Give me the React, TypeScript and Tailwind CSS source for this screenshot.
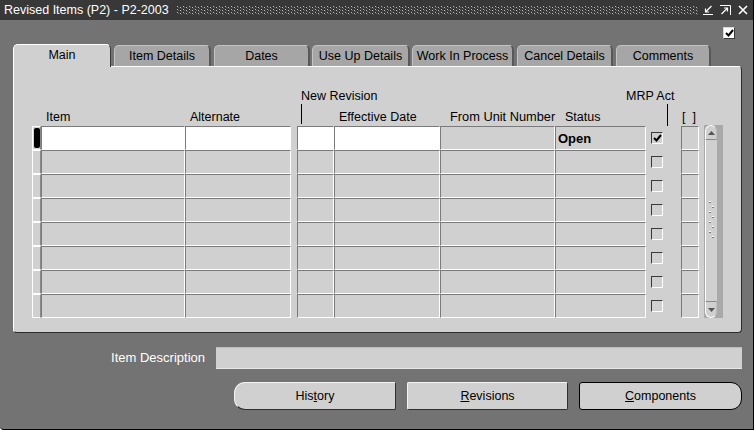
import React from 'react';

function TitleIcons() {
  return (
    <div className="flex items-center gap-[7px] ml-auto mr-[5px]">
      <svg width="10" height="10" viewBox="0 0 10 10">
        <path d="M8.5 1 L2.5 7 M2.5 3.5 V7 H6" stroke="#fff" strokeWidth="1.2" fill="none" />
        <path d="M0 9.5 H10" stroke="#fff" strokeWidth="1" />
      </svg>
      <svg width="11" height="10" viewBox="0 0 11 10">
        <path d="M0 0.5 H10.5 V10" stroke="#fff" strokeWidth="1" fill="none" />
        <path d="M1.5 9 L7.5 3 M4 3 H7.5 V6.5" stroke="#fff" strokeWidth="1.2" fill="none" />
      </svg>
      <svg width="10" height="10" viewBox="0 0 10 10">
        <path d="M1 1 L9 9 M9 1 L1 9" stroke="#fff" strokeWidth="1.6" />
      </svg>
    </div>
  );
}

function Check({ checked }: { checked?: boolean }) {
  return (
    <div className="w-[12px] h-[12px] border border-[#3a3a3a] border-r-white border-b-white flex items-center justify-center">
      {checked && (
        <svg width="9" height="8" viewBox="0 0 9 8">
          <path d="M1 4 L3.5 6.5 L8 1" stroke="#000" strokeWidth="2" fill="none" />
        </svg>
      )}
    </div>
  );
}

function Row({ first }: { first?: boolean }) {
  const cell = 'h-[24px] border border-[#7a7a7a] border-r-white border-b-white';
  const bg = first ? 'bg-white' : 'bg-[#d0d0d0]';
  return (
    <div className="flex h-[24px]">
      <div className="w-[9px] h-[24px] flex items-center justify-center border border-white border-r-[#8a8a8a]">
        {first && <div className="w-[6px] h-[20px] bg-black rounded-[2px]" />}
      </div>
      <div className={`w-[144px] ${cell} ${bg}`} />
      <div className={`w-[106px] ${cell} ${bg}`} />
      <div className="w-[6px]" />
      <div className={`w-[37px] ${cell} ${bg}`} />
      <div className={`w-[106px] ${cell} ${bg}`} />
      <div className={`w-[115px] ${cell} bg-[#d0d0d0]`} />
      <div className={`w-[91px] ${cell} bg-[#d0d0d0] flex items-center pl-[2px]`}>
        {first && <span className="text-[13px] font-bold leading-none">Open</span>}
      </div>
      <div className="w-[35px] flex items-center pl-[5px]">
        <Check checked={first} />
      </div>
      <div className={`w-[18px] ${cell} bg-[#d0d0d0]`} />
    </div>
  );
}

function Scrollbar() {
  return (
    <div className="w-[19px] h-[193px] -mt-[1px] ml-[5px] bg-[#a9a9a9] flex">
      <div className="w-[12px] h-full ml-[1px] flex flex-col">
        <div className="h-[15px] rounded-t-[6px] border border-white border-b-[#8a8a8a] border-r-[#bdbdbd] bg-[#d0d0d0] flex items-center justify-center">
          <svg width="7" height="4" viewBox="0 0 7 4"><path d="M0 4 L3.5 0 L7 4 Z" fill="#555" /></svg>
        </div>
        <div className="flex-1 border-l border-white bg-[#d0d0d0] flex items-center justify-center">
          <svg width="8" height="44" viewBox="0 0 8 44">
            {[0, 1, 2, 3, 4, 5, 6, 7].map((i) => (
              <g key={i}>
                <rect x={i % 2 ? 4 : 1} y={i * 5 + 2} width="2" height="1" fill="#fff" />
                <rect x={i % 2 ? 4 : 1} y={i * 5 + 3} width="2" height="1" fill="#7a7a7a" />
              </g>
            ))}
          </svg>
        </div>
        <div className="h-[17px] rounded-b-[6px] border border-white border-t-[#8a8a8a] border-r-[#bdbdbd] bg-[#d0d0d0] flex items-center justify-center">
          <svg width="7" height="4" viewBox="0 0 7 4"><path d="M0 0 L3.5 4 L7 0 Z" fill="#555" /></svg>
        </div>
      </div>
    </div>
  );
}

const TABS = [
  { label: 'Item Details', cls: 'ml-[3px] w-[97px]' },
  { label: 'Dates', cls: 'ml-[3px] w-[96px]' },
  { label: 'Use Up Details', cls: 'ml-[2px] w-[98px]' },
  { label: 'Work In Process', cls: 'ml-[2px] w-[102px]' },
  { label: 'Cancel Details', cls: 'ml-[3px] w-[96px]' },
  { label: 'Comments', cls: 'ml-[3px] w-[95px]' },
];

export default function App() {
  return (
    <div className="w-[756px] h-[433px] bg-white overflow-hidden font-['Liberation_Sans',Arial,sans-serif] text-[12.5px] text-black">
      <div className="w-[754px] h-[430px] bg-[#737373] border-r border-b border-black rounded-bl-[4px] flex flex-col">
        {/* Title bar */}
        <div className="h-[20px] bg-[#383838] flex items-center">
          <span className="pl-[4px] text-white text-[12.5px] leading-none whitespace-nowrap">Revised Items (P2) - P2-2003</span>
          <svg className="ml-[8px] mt-[1px]" width="522" height="9">
            <defs>
              <pattern id="dots" width="6" height="3" patternUnits="userSpaceOnUse">
                <rect x="0" y="0" width="1" height="1" fill="#bdbdbd" />
                <rect x="1" y="1" width="1" height="1" fill="#606060" />
                <rect x="3" y="1" width="1" height="1" fill="#bdbdbd" />
                <rect x="4" y="2" width="1" height="1" fill="#606060" />
              </pattern>
            </defs>
            <rect width="522" height="9" fill="url(#dots)" />
          </svg>
          <TitleIcons />
        </div>

        {/* top-right checkbox */}
        <div className="flex justify-end pr-[18px] mt-[7px]">
          <div className="w-[12px] h-[12px] bg-white border border-[#d8d8d8] border-r-[#3a3a3a] border-b-[#3a3a3a] flex items-center justify-center">
            <svg width="9" height="8" viewBox="0 0 9 8">
              <path d="M1 4 L3.5 6.5 L8 1" stroke="#000" strokeWidth="2" fill="none" />
            </svg>
          </div>
        </div>

        {/* Tabs */}
        <div className="flex items-end h-[22px] mt-[5px] pl-[13px]">
          <div className="relative z-10 w-[98px] h-[23px] -mb-[1px] bg-[#d0d0d0] rounded-t-[5px] border-l border-t border-white border-r border-r-[#3a3a3a] flex items-center justify-center pb-[1px]">
            Main
          </div>
          {TABS.map((t) => (
            <div
              key={t.label}
              className={`${t.cls} h-[21px] bg-[#a6a6a6] rounded-t-[5px] border-t border-l border-t-[#c4c4c4] border-l-[#c4c4c4] border-r-2 border-r-[#585858] flex items-center justify-center whitespace-nowrap`}
            >
              {t.label}
            </div>
          ))}
        </div>

        {/* Panel */}
        <div className="ml-[13px] w-[729px] h-[267px] bg-[#d0d0d0] rounded-[4px] rounded-tl-none border border-white border-r-[#2c2c2c] border-b-[#2c2c2c] pl-[18px] pt-[22px]">
          <div className="flex h-[15px] leading-[14px]">
            <div className="w-[269px]" />
            <div className="w-[325px]">New Revision</div>
            <div>MRP Act</div>
          </div>
          <div className="flex h-[20px] items-end leading-[14px]">
            <div className="w-[9px]" />
            <div className="w-[144px] pl-[5px]">Item</div>
            <div className="w-[106px] pl-[5px]">Alternate</div>
            <div className="w-[6px]" />
            <div className="w-[37px] h-full pl-[4px]">
              <div className="w-px h-[20px] bg-black" />
            </div>
            <div className="w-[106px] pl-[5px] whitespace-nowrap">Effective Date</div>
            <div className="w-[115px] pl-[10px] whitespace-nowrap text-[12.8px]">From Unit Number</div>
            <div className="w-[91px] pl-[10px]">Status</div>
            <div className="w-[35px] h-full pl-[21px]">
              <div className="w-px h-[22px] bg-black" />
            </div>
            <div className="w-[18px] pl-[1px] whitespace-pre">[  ]</div>
          </div>
          <div className="flex mt-[2px]">
            <div className="flex flex-col">
              <Row first />
              <Row />
              <Row />
              <Row />
              <Row />
              <Row />
              <Row />
              <Row />
            </div>
            <Scrollbar />
          </div>
        </div>

        {/* Item description */}
        <div className="flex items-center mt-[14px] h-[22px]">
          <div className="w-[205px] text-right text-white text-[13px]">Item Description</div>
          <div className="ml-[11px] w-[526px] h-[22px] bg-[#d0d0d0] border-t border-t-[#bcbcbc] border-b border-b-[#e6e6e6]" />
        </div>

        {/* Buttons */}
        <div className="flex mt-[13px] h-[28px]">
          <div className="ml-[234px] w-[162px] h-[28px] bg-[#d0d0d0] rounded-l-[11px] rounded-r-[2px] border border-[#f2f2f2] border-r-[#303030] border-b-[#303030] flex items-center justify-center">
            <span>His<span className="underline">t</span>ory</span>
          </div>
          <div className="ml-[11px] w-[161px] h-[28px] bg-[#d0d0d0] rounded-[2px] border border-[#f2f2f2] border-r-[#303030] border-b-[#303030] flex items-center justify-center">
            <span><span className="underline">R</span>evisions</span>
          </div>
          <div className="ml-[11px] w-[163px] h-[28px] bg-[#d0d0d0] rounded-l-[3px] rounded-r-[11px] border border-black flex items-center justify-center">
            <span><span className="underline">C</span>omponents</span>
          </div>
        </div>
      </div>
    </div>
  );
}
